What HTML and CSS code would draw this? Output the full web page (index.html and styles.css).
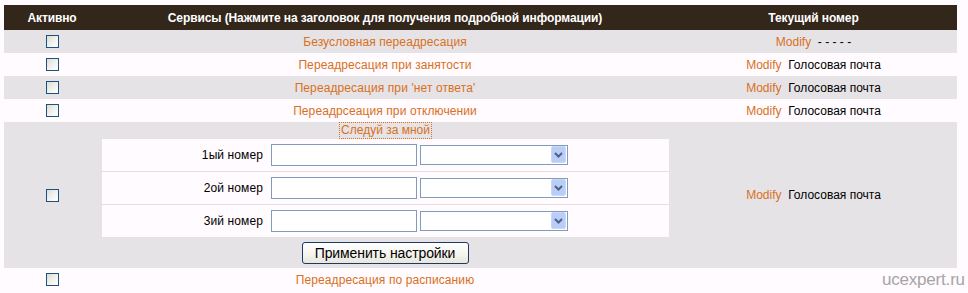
FILE: index.html
```html
<!DOCTYPE html>
<html lang="ru">
<head>
<meta charset="utf-8">
<title>Сервисы</title>
<link rel="stylesheet" href="styles.css">
</head>
<body>
<div class="page">
  <table class="svc">
    <colgroup><col class="c1"><col class="c2"><col class="c3"></colgroup>
    <thead>
      <tr class="head">
        <th>Активно</th>
        <th>Сервисы (Нажмите на заголовок для получения подробной информации)</th>
        <th>Текущий номер</th>
      </tr>
    </thead>
    <tbody>
      <tr class="grey">
        <td class="chk"><input type="checkbox" class="cb"></td>
        <td class="name"><a class="lnk">Безусловная переадресация</a></td>
        <td class="cur"><a class="lnk">Modify</a>&nbsp; - - - - -</td>
      </tr>
      <tr class="white">
        <td class="chk"><input type="checkbox" class="cb"></td>
        <td class="name"><a class="lnk">Переадресация при занятости</a></td>
        <td class="cur"><a class="lnk">Modify</a>&nbsp; Голосовая почта</td>
      </tr>
      <tr class="grey">
        <td class="chk"><input type="checkbox" class="cb"></td>
        <td class="name"><a class="lnk">Переадресация при 'нет ответа'</a></td>
        <td class="cur"><a class="lnk">Modify</a>&nbsp; Голосовая почта</td>
      </tr>
      <tr class="white">
        <td class="chk"><input type="checkbox" class="cb"></td>
        <td class="name"><a class="lnk">Переадрсеация при отключении</a></td>
        <td class="cur"><a class="lnk">Modify</a>&nbsp; Голосовая почта</td>
      </tr>
      <tr class="grey big">
        <td class="chk"><input type="checkbox" class="cb"></td>
        <td class="follow">
          <div class="follow-title"><a class="lnk focus">Следуй за мной</a></div>
          <div class="inner">
            <div class="irow">
              <label class="ilabel">1ый номер</label>
              <input type="text" class="itext">
              <span class="isel"><select><option></option></select><svg class="arrow" viewBox="0 0 15 17" width="15" height="17"><rect x="0.5" y="0.5" width="14" height="16" rx="1.5" fill="#b9cdf7" stroke="#c9d8fa"/><path d="M4 7 L7.5 10.5 L11 7" fill="none" stroke="#4d6185" stroke-width="2"/></svg></span>
            </div>
            <div class="irow">
              <label class="ilabel">2ой номер</label>
              <input type="text" class="itext">
              <span class="isel"><select><option></option></select><svg class="arrow" viewBox="0 0 15 17" width="15" height="17"><rect x="0.5" y="0.5" width="14" height="16" rx="1.5" fill="#b9cdf7" stroke="#c9d8fa"/><path d="M4 7 L7.5 10.5 L11 7" fill="none" stroke="#4d6185" stroke-width="2"/></svg></span>
            </div>
            <div class="irow">
              <label class="ilabel">3ий номер</label>
              <input type="text" class="itext">
              <span class="isel"><select><option></option></select><svg class="arrow" viewBox="0 0 15 17" width="15" height="17"><rect x="0.5" y="0.5" width="14" height="16" rx="1.5" fill="#b9cdf7" stroke="#c9d8fa"/><path d="M4 7 L7.5 10.5 L11 7" fill="none" stroke="#4d6185" stroke-width="2"/></svg></span>
            </div>
          </div>
          <div class="apply"><button type="button" class="btn">Применить настройки</button></div>
        </td>
        <td class="cur"><a class="lnk">Modify</a>&nbsp; Голосовая почта</td>
      </tr>
      <tr class="white">
        <td class="chk"><input type="checkbox" class="cb"></td>
        <td class="name"><a class="lnk">Переадресация по расписанию</a></td>
        <td class="cur"></td>
      </tr>
    </tbody>
  </table>
  <div class="mark">ucexpert.ru</div>
</div>
</body>
</html>
```

FILE: styles.css
```css
html, body {
  margin: 0;
  padding: 0;
  background: #fffbfe;
}
body {
  font-family: "Liberation Sans", Arial, sans-serif;
  font-size: 12px;
  color: #000;
}
.page {
  position: relative;
  width: 968px;
  height: 293px;
  padding: 5px 0 0 4px;
  box-sizing: border-box;
  overflow: hidden;
}
.svc {
  border-collapse: collapse;
  border-spacing: 0;
  width: 953px;
  table-layout: fixed;
}
.c1 { width: 96px; }
.c2 { width: 570px; }
.c3 { width: 287px; }
.svc th, .svc td {
  padding: 0;
  text-align: center;
  vertical-align: middle;
}
.head th {
  background: #33261b;
  color: #fff;
  font-weight: bold;
  height: 25px;
  font-size: 12px;
  letter-spacing: -0.1px;
}
.grey td { background: #e6e3e6; }
.white td { background: #fffbfe; }
.svc tbody tr { height: 23px; }
.svc tbody tr.big { height: 146px; }
.lnk {
  color: #d8701c;
  text-decoration: none;
}
.name { letter-spacing: 0.1px; }
.cur { white-space: nowrap; }
.cb {
  appearance: none;
  -webkit-appearance: none;
  display: block;
  margin: 0 auto;
  width: 13px;
  height: 13px;
  box-sizing: border-box;
  border: 1px solid #1c5180;
  background: linear-gradient(135deg, #dcdcd6 0%, #f4f4f1 60%, #ffffff 100%);
}
.follow {
  vertical-align: top !important;
}
.follow-title {
  height: 17px;
  display: flex;
  justify-content: center;
  align-items: center;
}
.focus {
  border: 1px dotted #d8701c;
  padding: 0 1px;
  line-height: 15px;
  margin-left: 1px;
}
.inner {
  margin: 0 1px 0 2px;
  width: 567px;
  background: #fffbfe;
}
.irow {
  display: flex;
  align-items: center;
  height: 32px;
  border-top: 1px solid #e2dfe2;
}
.irow:first-child { border-top: 0; }
.ilabel {
  width: 161px;
  padding-right: 8px;
  text-align: right;
  flex: none;
  letter-spacing: 0.1px;
}
.itext {
  width: 146px;
  height: 22px;
  box-sizing: border-box;
  border: 1px solid #7f9db9;
  background: #fff;
  margin: 0;
  padding: 0 2px;
  flex: none;
}
.isel {
  position: relative;
  display: block;
  width: 148px;
  height: 20px;
  margin-left: 3px;
  flex: none;
}
.isel select {
  appearance: none;
  -webkit-appearance: none;
  width: 148px;
  height: 20px;
  box-sizing: border-box;
  border: 1px solid #7f9db9;
  background: #fff;
  margin: 0;
  display: block;
}
.arrow {
  position: absolute;
  right: 2px;
  top: 1px;
  width: 15px;
  height: 17px;
}
.apply {
  height: 31px;
  display: flex;
  justify-content: center;
  align-items: center;
}
.btn {
  font-family: "Liberation Sans", Arial, sans-serif;
  font-size: 14px;
  width: 167px;
  height: 22px;
  padding: 0;
  border: 1px solid #1c3a66;
  border-radius: 3px;
  background: linear-gradient(#ffffff 0%, #f6f5f0 50%, #e8e6dc 100%);
  color: #000;
  letter-spacing: -0.1px;
}
.mark {
  position: absolute;
  left: 882px;
  top: 270px;
  font-family: "Liberation Sans", Arial, sans-serif;
  font-size: 17px;
  color: #a5a5a8;
  letter-spacing: -0.2px;
}
```
